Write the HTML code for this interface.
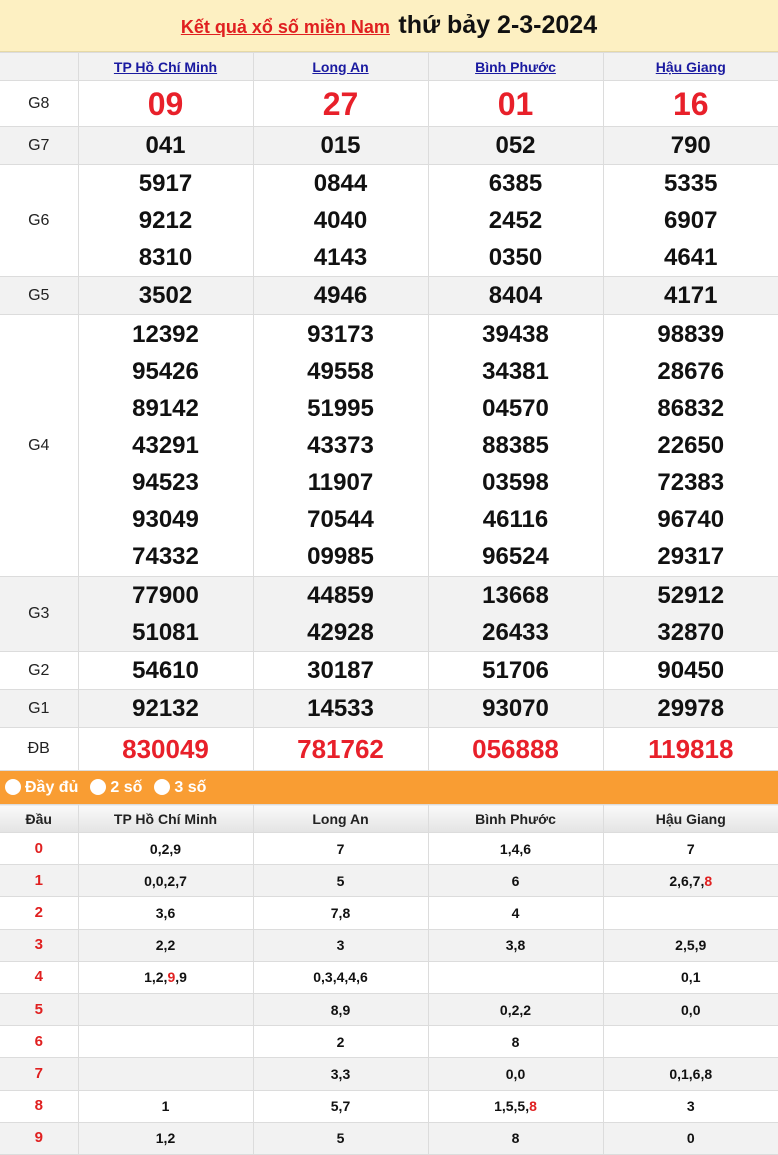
<!DOCTYPE html>
<html><head><meta charset="utf-8">
<style>
*{margin:0;padding:0;box-sizing:border-box}
body{width:778px;height:1154px;overflow:hidden;background:#fff;font-family:"Liberation Sans",Arial,sans-serif}
.top{height:52px;background:#fdf0c2;text-align:center;line-height:50px;border-bottom:1px solid #e6d9a6}
.top a{color:#e02020;font-size:18px;font-weight:bold;text-decoration:underline}
.top b{font-size:25px;color:#111;margin-left:4px}
table{border-collapse:collapse;width:778px;table-layout:fixed}
td{border:1px solid #dcdcdc;text-align:center;vertical-align:middle;padding:0}
tr>td:first-child{border-left:none}
tr>td:last-child{border-right:none}
col.c0{width:78px}
.kq td.n{font-size:24px;font-weight:bold;color:#111;line-height:37px}
.kq td.l{font-size:16px;color:#222}
.g{background:#f2f2f2}
.kq tr.h td{height:28px;font-size:14px;font-weight:bold}
.kq tr.h a{color:#1a1aa0;text-decoration:underline}
.kq td.r8{font-size:32px;color:#e8202a;font-weight:bold;line-height:40px}
.kq td.db{font-size:26px;color:#e8202a;font-weight:bold;line-height:36px}
.bar{height:33px;background:#f99d33;color:#fff;font-weight:bold;font-size:16px;line-height:33px;padding-left:5px}
.bar span{display:inline-block;margin-right:12px}
.bar i{display:inline-block;width:16px;height:16px;border-radius:50%;background:#fff;vertical-align:-3px;margin-right:4px}
.lt tr.lh td{height:28px;font-size:14px;font-weight:bold;color:#222;background:linear-gradient(#fafafa,#e3e3e3)}
.lt td{height:32.2px;font-size:14px;font-weight:bold;color:#111;line-height:16px}
.lt td.d{color:#e02020;font-size:15px}
.red{color:#e02020}
</style></head><body>
<div class="top"><a>Kết quả xổ số miền Nam</a> <b>thứ bảy 2-3-2024</b></div>
<table class="kq">
<col class="c0"><col><col><col><col>
<tr class="h g"><td></td><td><a>TP Hồ Chí Minh</a></td><td><a>Long An</a></td><td><a>Bình Phước</a></td><td><a>Hậu Giang</a></td></tr>
<tr style="height:46px"><td class="l">G8</td><td class="r8">09</td><td class="r8">27</td><td class="r8">01</td><td class="r8">16</td></tr>
<tr class="g" style="height:38px"><td class="l">G7</td><td class="n">041</td><td class="n">015</td><td class="n">052</td><td class="n">790</td></tr>
<tr style="height:112px"><td class="l">G6</td><td class="n">5917<br>9212<br>8310</td><td class="n">0844<br>4040<br>4143</td><td class="n">6385<br>2452<br>0350</td><td class="n">5335<br>6907<br>4641</td></tr>
<tr class="g" style="height:38px"><td class="l">G5</td><td class="n">3502</td><td class="n">4946</td><td class="n">8404</td><td class="n">4171</td></tr>
<tr style="height:262px"><td class="l">G4</td><td class="n">12392<br>95426<br>89142<br>43291<br>94523<br>93049<br>74332</td><td class="n">93173<br>49558<br>51995<br>43373<br>11907<br>70544<br>09985</td><td class="n">39438<br>34381<br>04570<br>88385<br>03598<br>46116<br>96524</td><td class="n">98839<br>28676<br>86832<br>22650<br>72383<br>96740<br>29317</td></tr>
<tr class="g" style="height:75px"><td class="l">G3</td><td class="n">77900<br>51081</td><td class="n">44859<br>42928</td><td class="n">13668<br>26433</td><td class="n">52912<br>32870</td></tr>
<tr style="height:38px"><td class="l">G2</td><td class="n">54610</td><td class="n">30187</td><td class="n">51706</td><td class="n">90450</td></tr>
<tr class="g" style="height:38px"><td class="l">G1</td><td class="n">92132</td><td class="n">14533</td><td class="n">93070</td><td class="n">29978</td></tr>
<tr style="height:43px"><td class="l">ĐB</td><td class="db">830049</td><td class="db">781762</td><td class="db">056888</td><td class="db">119818</td></tr>
</table>
<div class="bar"><span><i></i>Đầy đủ</span><span><i></i>2 số</span><span><i></i>3 số</span></div>
<table class="lt">
<col class="c0"><col><col><col><col>
<tr class="lh"><td>Đầu</td><td>TP Hồ Chí Minh</td><td>Long An</td><td>Bình Phước</td><td>Hậu Giang</td></tr>
<tr><td class="d">0</td><td>0,2,9</td><td>7</td><td>1,4,6</td><td>7</td></tr>
<tr class="g"><td class="d">1</td><td>0,0,2,7</td><td>5</td><td>6</td><td>2,6,7,<span class="red">8</span></td></tr>
<tr><td class="d">2</td><td>3,6</td><td>7,8</td><td>4</td><td></td></tr>
<tr class="g"><td class="d">3</td><td>2,2</td><td>3</td><td>3,8</td><td>2,5,9</td></tr>
<tr><td class="d">4</td><td>1,2,<span class="red">9</span>,9</td><td>0,3,4,4,6</td><td></td><td>0,1</td></tr>
<tr class="g"><td class="d">5</td><td></td><td>8,9</td><td>0,2,2</td><td>0,0</td></tr>
<tr><td class="d">6</td><td></td><td class="red">2</td><td>8</td><td></td></tr>
<tr class="g"><td class="d">7</td><td></td><td>3,3</td><td>0,0</td><td>0,1,6,8</td></tr>
<tr><td class="d">8</td><td>1</td><td>5,7</td><td>1,5,5,<span class="red">8</span></td><td>3</td></tr>
<tr class="g"><td class="d">9</td><td>1,2</td><td>5</td><td>8</td><td>0</td></tr>
</table>
</body></html>
